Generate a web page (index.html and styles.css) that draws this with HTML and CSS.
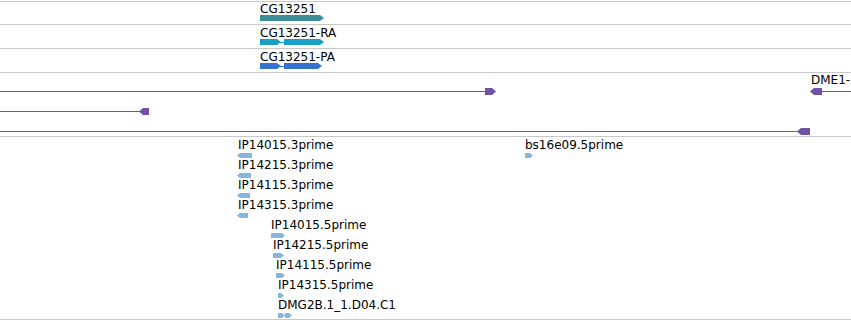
FILE: index.html
```html
<!DOCTYPE html>
<html lang="en">
<head>
    <meta charset="UTF-8">
    <title>Tracks</title>
    <link rel="stylesheet" href="styles.css">
</head>
<body>
    <div id="tracks">
        <div class="track gene-track">
            <div class="label" style="left: 260px; top: 0px;">CG13251</div>
            <div class="exon fwd teal" style="left: 260px; top: 13px; width: 64px;"></div>
        </div>

        <div class="track">
            <div class="label" style="left: 260px; top: 1px;">CG13251-RA</div>
            <div class="exon fwd cyan" style="left: 260px; top: 14px; width: 21px;"></div>
            <div class="intron cyan-line" style="left: 280px; top: 17px; width: 5px;"></div>
            <div class="exon fwd cyan" style="left: 284px; top: 14px; width: 40px;"></div>
        </div>

        <div class="track">
            <div class="label" style="left: 260px; top: 1px;">CG13251-PA</div>
            <div class="exon fwd blue" style="left: 260px; top: 14px; width: 21px;"></div>
            <div class="intron blue-line" style="left: 280px; top: 17px; width: 5px;"></div>
            <div class="exon fwd blue" style="left: 284px; top: 14px; width: 38px;"></div>
        </div>

        <div class="track wide">
            <div class="intron purple-line" style="left: 0; top: 18px; width: 486px;"></div>
            <div class="cap fwd purple" style="left: 485px; top: 15px; width: 11px;"></div>

            <div class="label" style="left: 811px; top: 0px;">DME1-</div>
            <div class="cap rev purple" style="left: 810px; top: 15px; width: 12px;"></div>
            <div class="intron purple-line" style="left: 821px; top: 18px; width: 30px;"></div>

            <div class="intron purple-line" style="left: 0; top: 38px; width: 141px;"></div>
            <div class="cap rev purple" style="left: 139px; top: 35px; width: 10px;"></div>

            <div class="intron purple-line" style="left: 0; top: 58px; width: 800px;"></div>
            <div class="cap rev purple" style="left: 797px; top: 55px; width: 13px;"></div>
        </div>

        <div class="track est-track">
            <div class="label" style="left: 238px; top: 1px;">IP14015.3prime</div>
            <div class="est rev" style="left: 237px; top: 16px; width: 15px;"></div>
            <div class="label" style="left: 238px; top: 21px;">IP14215.3prime</div>
            <div class="est rev" style="left: 237px; top: 36px; width: 14px;"></div>
            <div class="label" style="left: 238px; top: 41px;">IP14115.3prime</div>
            <div class="est rev" style="left: 237px; top: 56px; width: 13px;"></div>
            <div class="label" style="left: 238px; top: 61px;">IP14315.3prime</div>
            <div class="est rev" style="left: 237px; top: 76px; width: 11px;"></div>

            <div class="label" style="left: 271px; top: 81px;">IP14015.5prime</div>
            <div class="est fwd" style="left: 271px; top: 96px; width: 14px;"></div>
            <div class="label" style="left: 273px; top: 101px;">IP14215.5prime</div>
            <div class="est fwd" style="left: 273px; top: 116px; width: 11px;"></div>
            <div class="label" style="left: 276px; top: 121px;">IP14115.5prime</div>
            <div class="est fwd" style="left: 276px; top: 136px; width: 9px;"></div>
            <div class="label" style="left: 278px; top: 141px;">IP14315.5prime</div>
            <div class="est fwd" style="left: 278px; top: 156px; width: 6px;"></div>
            <div class="label" style="left: 278px; top: 161px;">DMG2B.1_1.D04.C1</div>
            <div class="est fwd" style="left: 278px; top: 176px; width: 7px;"></div>
            <div class="est fwd" style="left: 285px; top: 176px; width: 7px;"></div>

            <div class="label" style="left: 525px; top: 1px;">bs16e09.5prime</div>
            <div class="est fwd" style="left: 525px; top: 16px; width: 8px;"></div>
        </div>
    </div>
</body>
</html>
```

FILE: styles.css
```css
body {
    margin: 0;
    padding-top: 1px;
    background: #fff;
    font-family: "DejaVu Sans", sans-serif;
    font-size: 12px;
    color: #000;
    overflow: hidden;
}

#tracks {
    width: 851px;
}

.track {
    position: relative;
    height: 23px;
    border-top: 1px solid #c8c8c8;
}

.gene-track {
    height: 22px;
}

.track.wide {
    height: 63px;
}

.est-track {
    height: 182px;
    border-bottom: 1px solid #c8c8c8;
}

.label {
    position: absolute;
    line-height: 14px;
    white-space: nowrap;
}

.exon, .cap, .est, .intron {
    position: absolute;
}

.exon {
    height: 6px;
}

.cap {
    height: 7px;
}

.est {
    height: 5px;
    background: #84b6df;
}

.intron {
    height: 1px;
}

.exon.fwd, .cap.fwd {
    clip-path: polygon(0 0, calc(100% - 4px) 0, 100% 50%, calc(100% - 4px) 100%, 0 100%);
}

.exon.rev, .cap.rev {
    clip-path: polygon(4px 0, 100% 0, 100% 100%, 4px 100%, 0 50%);
}

.est.fwd {
    clip-path: polygon(0 0, calc(100% - 3px) 0, 100% 50%, calc(100% - 3px) 100%, 0 100%);
}

.est.rev {
    clip-path: polygon(3px 0, 100% 0, 100% 100%, 3px 100%, 0 50%);
}

.teal { background: #3c8f96; }
.cyan { background: #1a9ec3; }
.blue { background: #3672d2; }
.purple { background: #6f52a6; }

.cyan-line { background: #1a9ec3; }
.blue-line { background: #3672d2; }
.purple-line { background: #6f52a6; }
```
